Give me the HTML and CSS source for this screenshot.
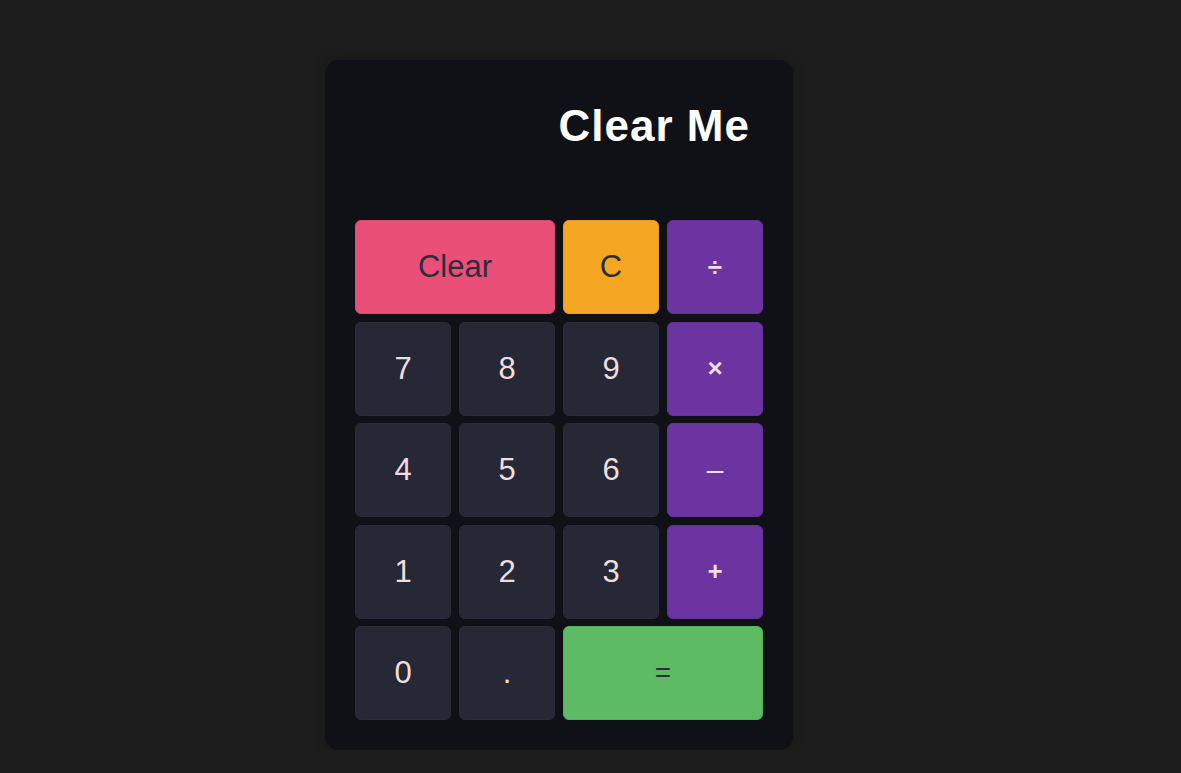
FILE: index.html
```html
<!DOCTYPE html>
<html lang="en">
<head>
<meta charset="utf-8">
<title>Calculator</title>
<link rel="stylesheet" href="styles.css">
</head>
<body>
<main class="page">
  <div class="calc">
    <div class="display">Clear Me</div>
    <div class="keys">
      <button class="key key-clear span2">Clear</button>
      <button class="key key-c">C</button>
      <button class="key key-op">÷</button>
      <button class="key">7</button>
      <button class="key">8</button>
      <button class="key">9</button>
      <button class="key key-op">×</button>
      <button class="key">4</button>
      <button class="key">5</button>
      <button class="key">6</button>
      <button class="key key-op key-minus">–</button>
      <button class="key">1</button>
      <button class="key">2</button>
      <button class="key">3</button>
      <button class="key key-op">+</button>
      <button class="key">0</button>
      <button class="key">.</button>
      <button class="key key-eq span2">=</button>
    </div>
  </div>
</main>
</body>
</html>
```
FILE: styles.css
```css
html, body {
  margin: 0;
  padding: 0;
  background: #1d1d1d;
  font-family: "Liberation Sans", Arial, sans-serif;
}
.page {
  display: flex;
  align-items: flex-start;
  justify-content: flex-start;
  padding: 60px 0 0 325px;
}
.calc {
  width: 468px;
  box-sizing: border-box;
  background: #101116;
  border-radius: 14px;
  padding: 0 30px 30px;
  box-shadow: 0 0 12px rgba(0, 0, 0, 0.25);
}
.display {
  height: 160px;
  box-sizing: border-box;
  padding: 41px 13px 0 0;
  text-align: right;
  color: #ffffff;
  font-size: 44px;
  font-weight: bold;
  letter-spacing: 1px;
  line-height: 50px;
}
.keys {
  display: grid;
  grid-template-columns: repeat(4, 96px);
  grid-auto-rows: 94px;
  column-gap: 8px;
  row-gap: 7.5px;
}
.key {
  font-family: "Liberation Sans", Arial, sans-serif;
  font-size: 31px;
  color: #f0dede;
  background: #262835;
  border: 1px solid #2a2c39;
  border-radius: 6px;
  padding: 0;
  margin: 0;
  display: flex;
  align-items: center;
  justify-content: center;
}
.span2 {
  grid-column: span 2;
}
.key-clear {
  background: #e94f77;
  border-color: #d84c73;
  color: #2b2d3c;
}
.key-c {
  background: #f5a623;
  border-color: #e49c24;
  color: #2b2d3c;
}
.key-op {
  background: #6c34a0;
  border-color: #66329a;
  font-size: 26px;
  font-weight: bold;
}
.key-minus {
  font-weight: normal;
  font-size: 30px;
}
.key-eq {
  background: #5cbb63;
  border-color: #57b05e;
  color: #2b2d3c;
  font-size: 28px;
}
```
